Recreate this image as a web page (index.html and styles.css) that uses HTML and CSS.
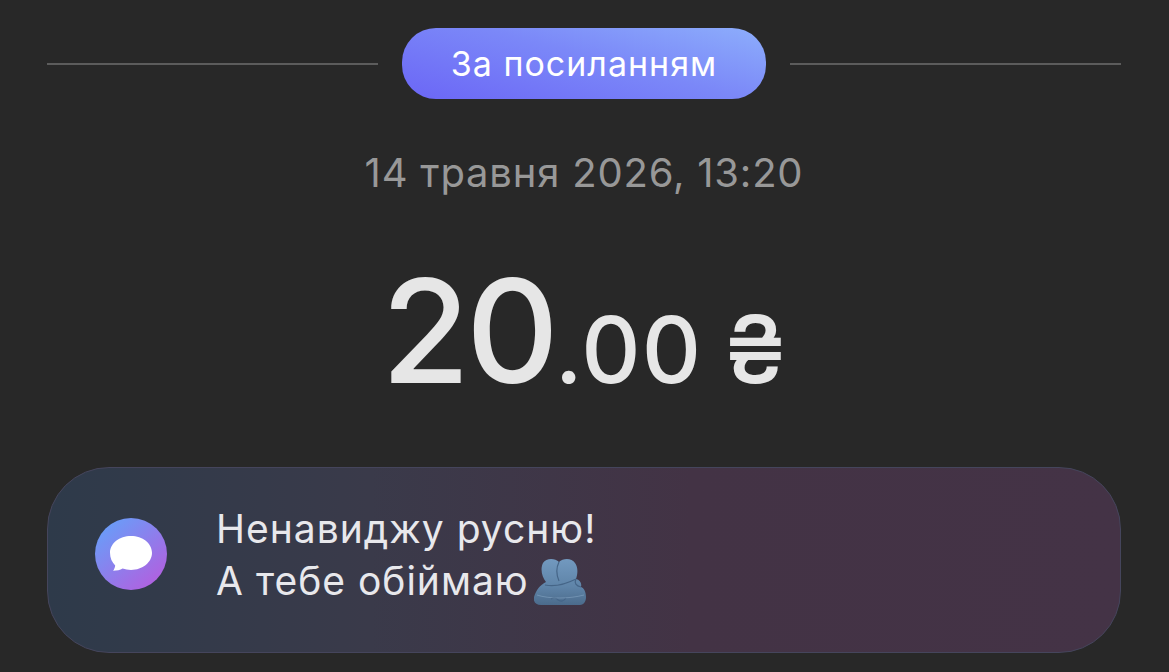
FILE: index.html
```html
<!DOCTYPE html>
<html lang="uk">
<head>
<meta charset="utf-8">
<title>За посиланням</title>
<link rel="stylesheet" href="styles.css">
</head>
<body>
<main class="receipt">
  <header class="kind">
    <span class="rule"></span>
    <span class="badge">За посиланням</span>
    <span class="rule"></span>
  </header>
  <p class="date">14 травня 2026, 13:20</p>
  <p class="amount"><span class="whole">20</span><span class="cents">.00</span><span class="currency">₴</span></p>
  <section class="comment">
    <span class="comment-icon">
      <svg viewBox="0 0 72 72" width="72" height="72" aria-hidden="true">
        <defs>
          <linearGradient id="bubbleBg" x1="0.15" y1="0.1" x2="0.85" y2="0.9">
            <stop offset="0" stop-color="#6a9cf8"/>
            <stop offset="1" stop-color="#b061e0"/>
          </linearGradient>
        </defs>
        <circle cx="36" cy="36" r="36" fill="url(#bubbleBg)"/>
        <path d="M36 18c11.600 0 21 7.400 21 16.800S47.600 52 36 52c-3 0-5.800-.5-8.400-1.400-2.400 1.400-5.600 2.200-9.600 2.200 1.200-1.600 2-3.400 2.200-5.400C17 44.400 15 40 15 34.800 15 25.400 24.400 18 36 18z" fill="#fff"/>
      </svg>
    </span>
    <p class="comment-text">Ненавиджу русню!<br>А тебе обіймаю<svg class="hug" viewBox="0 0 52 47" width="52" height="47" aria-hidden="true">
        <defs>
          <linearGradient id="hugFill" x1="0" y1="0" x2="0" y2="1">
            <stop offset="0" stop-color="#7299bf"/>
            <stop offset="0.6" stop-color="#5f84a8"/>
            <stop offset="1" stop-color="#4b6b8c"/>
          </linearGradient>
        </defs>
        <path d="M25 3C21-1 12-1 9 4 6 10 8 18 12 23 6 26 2 31 0 38c-1 5 2 8 7 8h39c4 0 6-4 6-8 0-5-2-9-5-10 1-4-1-7-5-8 2-6 2-12-1-16-3-5-12-5-16-1z" fill="url(#hugFill)"/>
        <path d="M25 3c-3 6-3 12 0 19M11 26c9 2 21-1 31-6M42 20c-2 4 0 7 5 8M17 40c3-2 5-2 7 1 3 2 6 1 8-2" fill="none" stroke="#456587" stroke-width="1.200"/>
        <path d="M3 36c12 4 32 4 47 0" fill="none" stroke="#93b2cf" stroke-width="1" opacity=".45"/>
      </svg></p>
  </section>
</main>
</body>
</html>
```

FILE: styles.css
```css
* {
  box-sizing: border-box;
}

html,
body {
  margin: 0;
  height: 100%;
}

body {
  background: #282828;
  font-family: Inter, "Noto Sans", sans-serif;
  font-optical-sizing: none;
  overflow: hidden;
}

.receipt {
  display: flex;
  flex-direction: column;
  padding: 28px 48px 0 47px;
}

.kind {
  display: flex;
  align-items: center;
  gap: 24px;
  height: 71px;
}

.rule {
  flex: 1;
  height: 2px;
  background: #5c5c5c;
}

.badge {
  display: flex;
  align-items: center;
  justify-content: center;
  width: 364px;
  height: 71px;
  border-radius: 34px;
  background: linear-gradient(15deg, #6b66f6 0%, #7b88f8 55%, #8daefc 100%);
  color: #fff;
  font-size: 34px;
  letter-spacing: 1px;
}

.date {
  margin: 51px 0 0;
  text-align: center;
  color: #989898;
  font-size: 40px;
  line-height: 46px;
  letter-spacing: 0.8px;
}

.amount {
  display: flex;
  justify-content: center;
  align-items: baseline;
  margin: 59px 0 0;
  height: 152px;
  color: #e6e6e6;
  font-weight: 500;
  line-height: 152px;
}

.whole {
  font-size: 144px;
  letter-spacing: -4px;
}

.cents {
  font-size: 92px;
  letter-spacing: 1px;
}

.currency {
  margin-left: 22px;
  font-size: 94px;
  font-weight: 450;
}

.comment {
  display: flex;
  align-items: center;
  height: 186px;
  margin-top: 60px;
  padding-left: 47px;
  border: 1px solid #45455c;
  border-radius: 62px;
  background: linear-gradient(90deg, #2e3a4a 0%, #3a3a4a 30%, #433345 60%, #443346 100%);
}

.comment-icon {
  display: flex;
  flex: none;
  width: 72px;
  height: 72px;
  margin-bottom: 12px;
}

.comment-text {
  margin: 0 0 10px 49px;
  color: #e8e8ec;
  font-size: 39px;
  line-height: 52px;
  letter-spacing: 1px;
}

.hug {
  margin-left: 5px;
  vertical-align: -11px;
}
```
